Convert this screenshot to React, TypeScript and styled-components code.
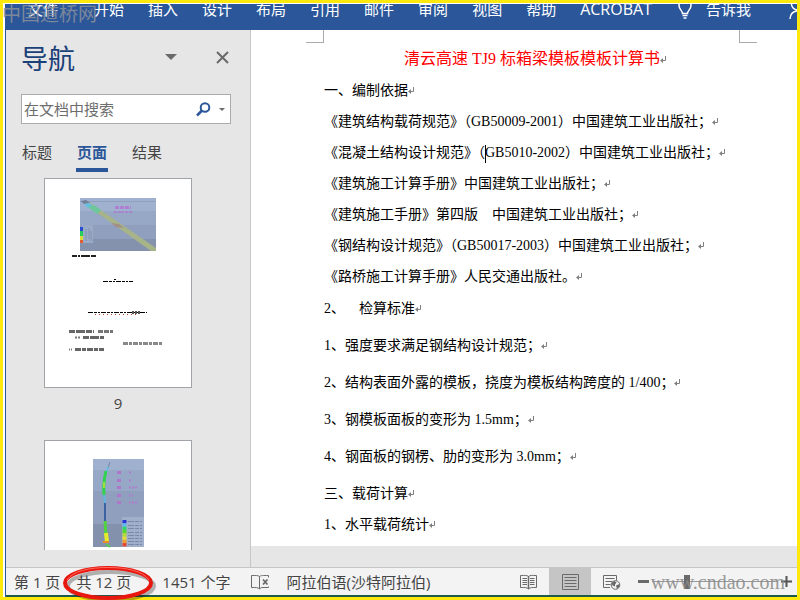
import React from "react";
import styled, { createGlobalStyle } from "styled-components";

const UI_FONT = '"Open Sans", "Noto Sans CJK SC", sans-serif';
const DOC_FONT = '"Liberation Serif", "Noto Sans CJK SC", serif';
const BLUE = "#2b579a";

const GlobalStyle = createGlobalStyle`
  * { box-sizing: border-box; }
  body { margin: 0; font-family: ${UI_FONT}; font-size: 15px; color: #444; }
  button, input { font: inherit; color: inherit; }
  button { border: 0; padding: 0; background: none; white-space: nowrap; }
  svg { display: block; flex: none; }
`;

const Frame = styled.div`
  position: relative;
  height: 100vh;
  background: #ffe80c;
  padding: 3px;
  overflow: hidden;
`;

const Mat = styled.div`
  height: 100%;
  background: #fff;
  padding: 1px 0 0 2px;
`;

const Window = styled.div`
  height: 100%;
  display: flex;
  flex-direction: column;
  border-left: 1px solid ${BLUE};
`;

const Ribbon = styled.nav`
  flex: none;
  height: 26px;
  display: flex;
  align-items: flex-end;
  gap: 24px;
  padding: 0 0 11px 22px;
  overflow: hidden;
  background: ${BLUE};
  color: #fff;
`;

const RibbonTab = styled.button<{ $file?: boolean; $latin?: boolean }>`
  flex: none;
  display: flex;
  align-items: center;
  gap: 14px;
  line-height: 20px;
  font-size: ${(p) => (p.$latin ? "16px" : "15px")};
  margin-right: ${(p) => (p.$file ? "12px" : p.$latin ? "2px" : "0")};
`;

const Account = styled.button`
  flex: none;
  margin-left: auto;
`;

const Workspace = styled.div`
  flex: 1;
  min-height: 0;
  display: flex;
  background: #e6e6e6;
`;

const NavPane = styled.aside`
  flex: none;
  width: 245px;
  display: flex;
  flex-direction: column;
  padding: 12px 19px 17px 15px;
  border-right: 1px solid #c6c6c6;
`;

const NavHeader = styled.header`
  display: flex;
  align-items: flex-start;
  height: 34px;
  padding-right: 2px;
`;

const NavTitle = styled.h1`
  flex: 1;
  margin: 0;
  font-size: 27px;
  font-weight: 400;
  line-height: 34px;
  color: #1a4078;
`;

const PaneButton = styled.button`
  margin-left: 39px;
  height: 30px;
  display: flex;
  align-items: center;
`;

const SearchBox = styled.div`
  display: flex;
  align-items: center;
  height: 30px;
  margin-top: 18px;
  padding: 0 5px 0 2px;
  gap: 8px;
  border: 1px solid #ababab;
  background: #fff;
`;

const SearchInput = styled.input`
  flex: 1;
  min-width: 0;
  border: 0;
  padding: 0;
  outline: 0;
  background: transparent;
  &::placeholder { color: #6d6d6d; opacity: 1; }
`;

const NavTabs = styled.div`
  display: flex;
  gap: 23px;
  margin-top: 16px;
`;

const NavTab = styled.button<{ $active?: boolean }>`
  height: 32px;
  padding: 0 1px 8px;
  line-height: 24px;
  color: ${(p) => (p.$active ? BLUE : "#444")};
  font-weight: ${(p) => (p.$active ? 700 : 400)};
  border-bottom: 4px solid ${(p) => (p.$active ? BLUE : "transparent")};
`;

const Thumbs = styled.div`
  flex: 1;
  min-height: 0;
  overflow: hidden;
  padding: 6px 0 0 23px;
`;

const Thumb = styled.figure`
  margin: 0;
  width: 148px;
`;

const Sheet = styled.div`
  height: 210px;
  border: 1px solid #a0a4a8;
  background: #fff;
`;

const ThumbLabel = styled.figcaption`
  height: 52px;
  line-height: 31px;
  text-align: center;
`;

const DocPane = styled.main`
  flex: 1;
  min-width: 0;
  display: flex;
  flex-direction: column;
  padding-bottom: 21px;
`;

const Paper = styled.article`
  flex: 1;
  min-height: 0;
  overflow: hidden;
  background: #fff;
  color: #000;
  font-family: ${DOC_FONT};
  font-size: 14px;
`;

const Corners = styled.div`
  display: flex;
  justify-content: space-between;
  padding: 0 40px 0 55px;
`;

const Corner = styled.span<{ $side: "left" | "right" }>`
  width: 18px;
  height: 13px;
  border-bottom: 1px solid #ababab;
  border-right: ${(p) => (p.$side === "left" ? "1px solid #ababab" : "0")};
  border-left: ${(p) => (p.$side === "right" ? "1px solid #ababab" : "0")};
`;

const Content = styled.div`
  padding: 0 57px 0 73px;
`;

const DocTitle = styled.h2`
  margin: 0;
  font-size: 16px;
  font-weight: 400;
  line-height: 31px;
  text-align: center;
  color: #f00;
`;

type Kind = "text" | "section" | "item";
const SPACING: Record<Kind, string> = { text: "0", section: "1px", item: "6px" };

const Paragraph = styled.p<{ $kind: Kind }>`
  margin: ${(p) => SPACING[p.$kind]} 0 0;
  line-height: 31px;
`;

const MarkIcon = styled.svg`
  display: inline-block;
  margin-right: -6px;
`;

const Caret = styled.span`
  display: inline-block;
  width: 1px;
  height: 18px;
  margin-right: -1px;
  vertical-align: middle;
  background: #000;
`;

const StatusBar = styled.footer`
  flex: none;
  display: flex;
  align-items: stretch;
  height: 30px;
  padding: 0 5px 0 8px;
  border-top: 1px solid #c6c6c6;
  border-bottom: 2px solid #1c5a4c;
  background: #f3f3f3;
`;

const StatusItem = styled.button<{ $gap: number }>`
  position: relative;
  flex: none;
  margin-right: ${(p) => p.$gap}px;
  line-height: 26px;
  display: flex;
  align-items: center;
`;

const Circle = styled.svg`
  position: absolute;
  left: -13px;
  top: -3px;
  pointer-events: none;
`;

const Views = styled.div`
  display: flex;
  margin-left: auto;
`;

const ViewButton = styled.button<{ $active?: boolean }>`
  width: 42px;
  display: flex;
  align-items: center;
  justify-content: center;
  background: ${(p) => (p.$active ? "#c5c5c5" : "transparent")};
`;

const Zoom = styled.div`
  display: flex;
  align-items: center;
  gap: 3px;
  margin-left: 5px;
`;

const Slider = styled.input`
  appearance: none;
  width: 126px;
  height: 16px;
  margin: 0;
  background: linear-gradient(#999, #999) center / 100% 1px no-repeat;
  &::-webkit-slider-thumb {
    appearance: none;
    width: 6px;
    height: 14px;
    background: #6a6a6a;
  }
`;

const Watermark = styled.span<{ $corner: "top" | "bottom" }>`
  position: absolute;
  pointer-events: none;
  white-space: nowrap;
  line-height: 24px;
  ${(p) =>
    p.$corner === "top"
      ? `left: 2px; top: 1px; font-size: 19px; color: rgba(140, 145, 155, 0.85); font-family: "Noto Sans CJK SC", sans-serif;`
      : `right: 15px; bottom: 6px; font-size: 20px; color: rgba(140, 140, 140, 0.9); font-family: "Liberation Serif", serif;`}
`;

const ReturnMark = () => (
  <MarkIcon width="6" height="8" viewBox="0 0 6 8" fill="none" stroke="#808080" aria-hidden="true">
    <path d="M5.500 0v4.500H1" />
    <path d="M3 2v5L0 4.500z" fill="#808080" stroke="none" />
  </MarkIcon>
);

const BulbIcon = () => (
  <svg width="14" height="20" viewBox="0 0 14 20" fill="none" stroke="#fff" strokeWidth="1.5">
    <path d="M4.500 14.500C4.500 11.500 1 10.500 1 6.500a6 6 0 0 1 12 0C13 10.500 9.500 11.500 9.500 14.500z" />
    <path d="M4.500 16.500h5M5.500 19h3" />
  </svg>
);

const PersonIcon = () => (
  <svg width="8" height="20" viewBox="0 0 8 20" fill="none" stroke="#fff" strokeWidth="1.4">
    <path d="M8 11C4 10 2.500 8 2.500 5S4 .8 8 .5M1 20c.3-5 2.500-7.500 7-8" />
  </svg>
);

const SearchIcon = () => (
  <svg width="15" height="15" viewBox="0 0 15 15" fill="none" stroke={BLUE} strokeWidth="2">
    <circle cx="9" cy="5.500" r="4.300" />
    <path d="M6 8.500L1 13.500" strokeWidth="2.500" />
  </svg>
);

const ProofIcon = () => (
  <svg width="18" height="16" viewBox="0 0 18 16" fill="none" stroke="#6a6a6a">
    <path d="M8.500 2.500C7 1.300 5 1.500 .5 1.500v12c4.500 0 6.500-.2 8 1.500V2.500C10 1.300 12 1.500 17.500 1.500v2M8.500 15c1-1.300 2-1.500 3.500-1.500h5.500v-1" />
    <path d="M12 5.500l4.500 5M16.500 5.500l-4.500 5" strokeWidth="1.800" />
  </svg>
);

const ReadIcon = () => (
  <svg width="17" height="16" viewBox="0 0 17 16" fill="none" stroke="#6a6a6a">
    <path d="M8.500 2.500C7 1 5 1.500 .5 1.500v12c4.500 0 6.500-.2 8 1.500 1.500-1.700 3.500-1.500 8-1.500v-12c-4.500 0-6.500-.5-8 1z" />
    <path d="M8.500 2v13" strokeWidth="1.500" />
    <path d="M2.500 4.500H7M2.500 6.500H7M2.500 8.500H7M2.500 10.500H7M10 4.500h4.500M10 6.500h4.500M10 8.500h4.500M10 10.500h4.500" />
  </svg>
);

const PrintIcon = () => (
  <svg width="17" height="16" viewBox="0 0 17 16" fill="none" stroke="#6a6a6a">
    <path d="M.5.5h16v15H.5z" />
    <path d="M2.500 3.500h12M2.500 6.500h12M2.500 9.500h12M2.500 12.500h12" />
  </svg>
);

const WebIcon = () => (
  <svg width="18" height="16" viewBox="0 0 18 16" fill="none" stroke="#6a6a6a">
    <path d="M7 13.500H.5V1.500h13v5M2.500 4.500h9M2.500 7.500h7M2.500 10.500h5" />
    <circle cx="12.500" cy="11" r="4.300" fill="#f3f3f3" />
    <path d="M8.500 9l3-2 2 1.500-1.500 2v2L9.500 11.500zM13 11.500l3.500-1.500v2.500L14 15z" fill="#6a6a6a" stroke="none" />
  </svg>
);

const tinyRow = (x: number, y: number, w: number, dash: string, width = 2, color = "#222") => (
  <path d={`M${x} ${y}h${w}`} stroke={color} strokeWidth={width} strokeDasharray={dash} />
);

const PageNine = () => (
  <svg width="146" height="208" viewBox="0 0 146 208" fill="none" aria-hidden="true">
    <path d="M35 19h76v53H35z" fill="#8f9fbd" />
    <path d="M35 19h76v13H35z" fill="#a0b1cf" />
    <path d="M35 32h76v14H35z" fill="#97a8c7" />
    <path d="M35 60h76v12H35z" fill="#8492ae" />
    <path d="M35 22.500h76" stroke="#8fa0be" />
    <path d="M37 23h7l67 46v3h-5z" fill="#a7b388" />
    <path d="M36 22l5-1 4 3-6 1z" fill="#737f98" />
    <path d="M39 25l5-1 4 3-5 2z" fill="#65bfe3" />
    <path d="M43 28l6-2 7 5-4 4z" fill="#6cc79b" />
    <path d="M66 44l8 1 5 4-8-1z" fill="#a48f86" />
    {tinyRow(70, 28.5, 16, "4 1", 3, "#b07fd2")}
    {tinyRow(69, 33, 18, "3 1 6 1", 2, "#a985d0")}
    <path d="M36 46h12v18H36z" fill="#9aabc8" />
    <path d="M36.500 48v4" stroke="#274cd0" strokeWidth="3" />
    <path d="M36.500 52v5" stroke="#27ce5b" strokeWidth="3" />
    <path d="M36.500 57v4" stroke="#d8dc3b" strokeWidth="3" />
    <path d="M36.500 61v3" stroke="#e35d32" strokeWidth="3" />
    <path d="M41 50v12M44 49v11M46 52v10" stroke="#8292b0" />
    {tinyRow(27, 77, 25, "5 1 2 1 9 1", 2)}
    {tinyRow(58, 102.5, 30, "5 1 3 1 2 1", 1, "#000")}
    {tinyRow(69, 100.5, 18, "2 16", 1, "#000")}
    {tinyRow(43, 133.5, 59, "5 1 3 1 2 1", 1, "#000")}
    {tinyRow(50, 135.5, 42, "1 3", 1, "#b74030")}
    {tinyRow(87, 133.5, 9, "2 1", 3, "#555")}
    {tinyRow(24, 152.5, 25, "6 1 9 1", 3, "#666")}
    {tinyRow(53, 152.5, 15, "5 1", 3, "#777")}
    {tinyRow(30, 158.5, 5, "2 1", 2, "#777")}
    {tinyRow(38, 158.5, 21, "6 1 9 1", 3, "#666")}
    {tinyRow(78, 164.5, 40, "5 1 3 1", 3, "#888")}
    {tinyRow(24, 170.5, 4, "1 1", 2, "#777")}
    {tinyRow(30, 170.5, 29, "6 1 4 1", 3, "#666")}
  </svg>
);

const PageTen = () => (
  <svg width="146" height="208" viewBox="0 0 146 208" fill="none" aria-hidden="true">
    <path d="M48 18h51v88H48z" fill="#8f9fbd" />
    <path d="M48 18h51v11H48z" fill="#a0b1cf" />
    <path d="M48 29h51v21H48z" fill="#97a8c7" />
    <path d="M48 83h51v23H48z" fill="#8391ad" />
    <path d="M65 21l-2 6" stroke="#7186a3" />
    <path d="M63 26l-2 6" stroke="#65bde0" strokeWidth="2" />
    <path d="M61 30q-3 12-2 24" stroke="#32d14f" strokeWidth="3" />
    <path d="M59 41v6" stroke="#9be337" strokeWidth="2" />
    <path d="M59 54l1 8" stroke="#60b7e2" strokeWidth="2" />
    <path d="M60 62v18" stroke="#3c62a4" strokeWidth="2" />
    <path d="M60 80l1 14" stroke="#50d33e" strokeWidth="3" />
    <path d="M61 92l1 9" stroke="#e6ec2c" strokeWidth="4" />
    <path d="M58 101h6" stroke="#f08b2b" strokeWidth="2" />
    <path d="M61 103l4 3" stroke="#57ce4b" strokeWidth="2" />
    {[31, 39, 46, 54, 61].map((y, i) => (
      <React.Fragment key={y}>
        {tinyRow(72, y + 0.5, 4, "4 1", 3, "#af76c9")}
        {tinyRow(84, y + 0.5, [3, 3, 9, 4, 9][i], "2 1", 2, "#b07ccd")}
      </React.Fragment>
    ))}
    <path d="M77 76h22v30H77z" fill="#a0afca" />
    {[80, 84, 87, 91, 94, 97, 100, 103].map((y) => (
      <React.Fragment key={y}>{tinyRow(83, y + 0.5, 14, "6 1 4 1", 1, "#7a89a5")}</React.Fragment>
    ))}
    {["#2637d5", "#60b7ed", "#30d76a", "#57d92d", "#b1dc35", "#e4e036", "#f09d32", "#e64431"].map((c, i) => (
      <path key={c} d={`M77.500 ${79 + i * 3.3}h4v3.300h-4z`} fill={c} />
    ))}
  </svg>
);

const RIBBON = ["开始", "插入", "设计", "布局", "引用", "邮件", "审阅", "视图", "帮助"];

const LINES: { kind: Kind; text: string; after?: string }[] = [
  { kind: "section", text: "一、编制依据" },
  { kind: "text", text: "《建筑结构载荷规范》（GB50009-2001）中国建筑工业出版社；" },
  { kind: "text", text: "《混凝土结构设计规范》（", after: "GB5010-2002）中国建筑工业出版社；" },
  { kind: "text", text: "《建筑施工计算手册》中国建筑工业出版社；" },
  { kind: "text", text: "《建筑施工手册》第四版　中国建筑工业出版社；" },
  { kind: "text", text: "《钢结构设计规范》（GB50017-2003）中国建筑工业出版社；" },
  { kind: "text", text: "《路桥施工计算手册》人民交通出版社。" },
  { kind: "section", text: "2、\u00a0\u00a0\u00a0\u00a0检算标准" },
  { kind: "item", text: "1、强度要求满足钢结构设计规范；" },
  { kind: "item", text: "2、结构表面外露的模板，挠度为模板结构跨度的 1/400；" },
  { kind: "item", text: "3、钢模板面板的变形为 1.5mm；" },
  { kind: "item", text: "4、钢面板的钢楞、肋的变形为 3.0mm；" },
  { kind: "item", text: "三、载荷计算" },
  { kind: "text", text: "1、水平载荷统计" },
];

export default function App() {
  return (
    <Frame lang="zh-CN">
      <GlobalStyle />
      <Mat>
        <Window>
          <Ribbon>
            <RibbonTab $file>文件</RibbonTab>
            {RIBBON.map((name) => (
              <RibbonTab key={name}>{name}</RibbonTab>
            ))}
            <RibbonTab $latin>ACROBAT</RibbonTab>
            <RibbonTab>
              <BulbIcon />
              告诉我
            </RibbonTab>
            <Account aria-label="账户">
              <PersonIcon />
            </Account>
          </Ribbon>

          <Workspace>
            <NavPane>
              <NavHeader>
                <NavTitle>导航</NavTitle>
                <PaneButton aria-label="窗格选项">
                  <svg width="12" height="6" viewBox="0 0 12 6">
                    <path d="M0 0h12L6 6z" fill="#6a6a6a" />
                  </svg>
                </PaneButton>
                <PaneButton aria-label="关闭">
                  <svg width="13" height="13" viewBox="0 0 13 13" stroke="#6a6a6a" strokeWidth="2">
                    <path d="M1 1l11 11M12 1L1 12" />
                  </svg>
                </PaneButton>
              </NavHeader>
              <SearchBox>
                <SearchInput type="text" placeholder="在文档中搜索" aria-label="在文档中搜索" />
                <button aria-label="搜索">
                  <SearchIcon />
                </button>
                <button aria-label="搜索选项">
                  <svg width="6" height="3" viewBox="0 0 6 3">
                    <path d="M0 0h6L3 3z" fill="#6a6a6a" />
                  </svg>
                </button>
              </SearchBox>
              <NavTabs role="tablist">
                <NavTab role="tab">标题</NavTab>
                <NavTab role="tab" aria-selected="true" $active>
                  页面
                </NavTab>
                <NavTab role="tab">结果</NavTab>
              </NavTabs>
              <Thumbs>
                <Thumb>
                  <Sheet>
                    <PageNine />
                  </Sheet>
                  <ThumbLabel>9</ThumbLabel>
                </Thumb>
                <Thumb>
                  <Sheet>
                    <PageTen />
                  </Sheet>
                </Thumb>
              </Thumbs>
            </NavPane>

            <DocPane>
              <Paper>
                <Corners>
                  <Corner $side="left" />
                  <Corner $side="right" />
                </Corners>
                <Content>
                  <DocTitle>
                    清云高速 TJ9 标箱梁模板模板计算书
                    <ReturnMark />
                  </DocTitle>
                  {LINES.map((line) => (
                    <Paragraph key={line.text} $kind={line.kind}>
                      {line.text}
                      {line.after && <Caret />}
                      {line.after}
                      <ReturnMark />
                    </Paragraph>
                  ))}
                </Content>
              </Paper>
            </DocPane>
          </Workspace>

          <StatusBar>
            <StatusItem $gap={16}>第 1 页</StatusItem>
            <StatusItem $gap={31}>
              共 12 页
              <Circle width="96" height="40" viewBox="0 0 96 40" fill="none" aria-hidden="true">
                <ellipse cx="48" cy="21" rx="43" ry="14" stroke="#000" strokeOpacity=".28" strokeWidth="4" />
                <ellipse cx="45" cy="18" rx="43" ry="15" stroke="#e8170f" strokeWidth="4" />
                <path d="M4 15C10 6 26 2.500 45 2.500S80 6 86 15" stroke="#ff6a5c" />
              </Circle>
            </StatusItem>
            <StatusItem $gap={20}>1451 个字</StatusItem>
            <StatusItem $gap={18} aria-label="校对">
              <ProofIcon />
            </StatusItem>
            <StatusItem $gap={16}>阿拉伯语(沙特阿拉伯)</StatusItem>
            <Views>
              <ViewButton aria-label="阅读视图">
                <ReadIcon />
              </ViewButton>
              <ViewButton aria-label="页面视图" $active>
                <PrintIcon />
              </ViewButton>
              <ViewButton aria-label="Web 版式视图">
                <WebIcon />
              </ViewButton>
            </Views>
            <Zoom>
              <button aria-label="缩小">
                <svg width="11" height="11" viewBox="0 0 11 11" stroke="#6a6a6a" strokeWidth="3">
                  <path d="M0 5.500h11" />
                </svg>
              </button>
              <Slider type="range" min="0" max="100" defaultValue="27" aria-label="缩放" />
              <button aria-label="放大">
                <svg width="11" height="11" viewBox="0 0 11 11" stroke="#555" strokeWidth="2">
                  <path d="M0 5.500h11M5.500 0v11" />
                </svg>
              </button>
            </Zoom>
          </StatusBar>
        </Window>
      </Mat>
      <Watermark $corner="top">中国道桥网</Watermark>
      <Watermark $corner="bottom">www.cndao.com</Watermark>
    </Frame>
  );
}
